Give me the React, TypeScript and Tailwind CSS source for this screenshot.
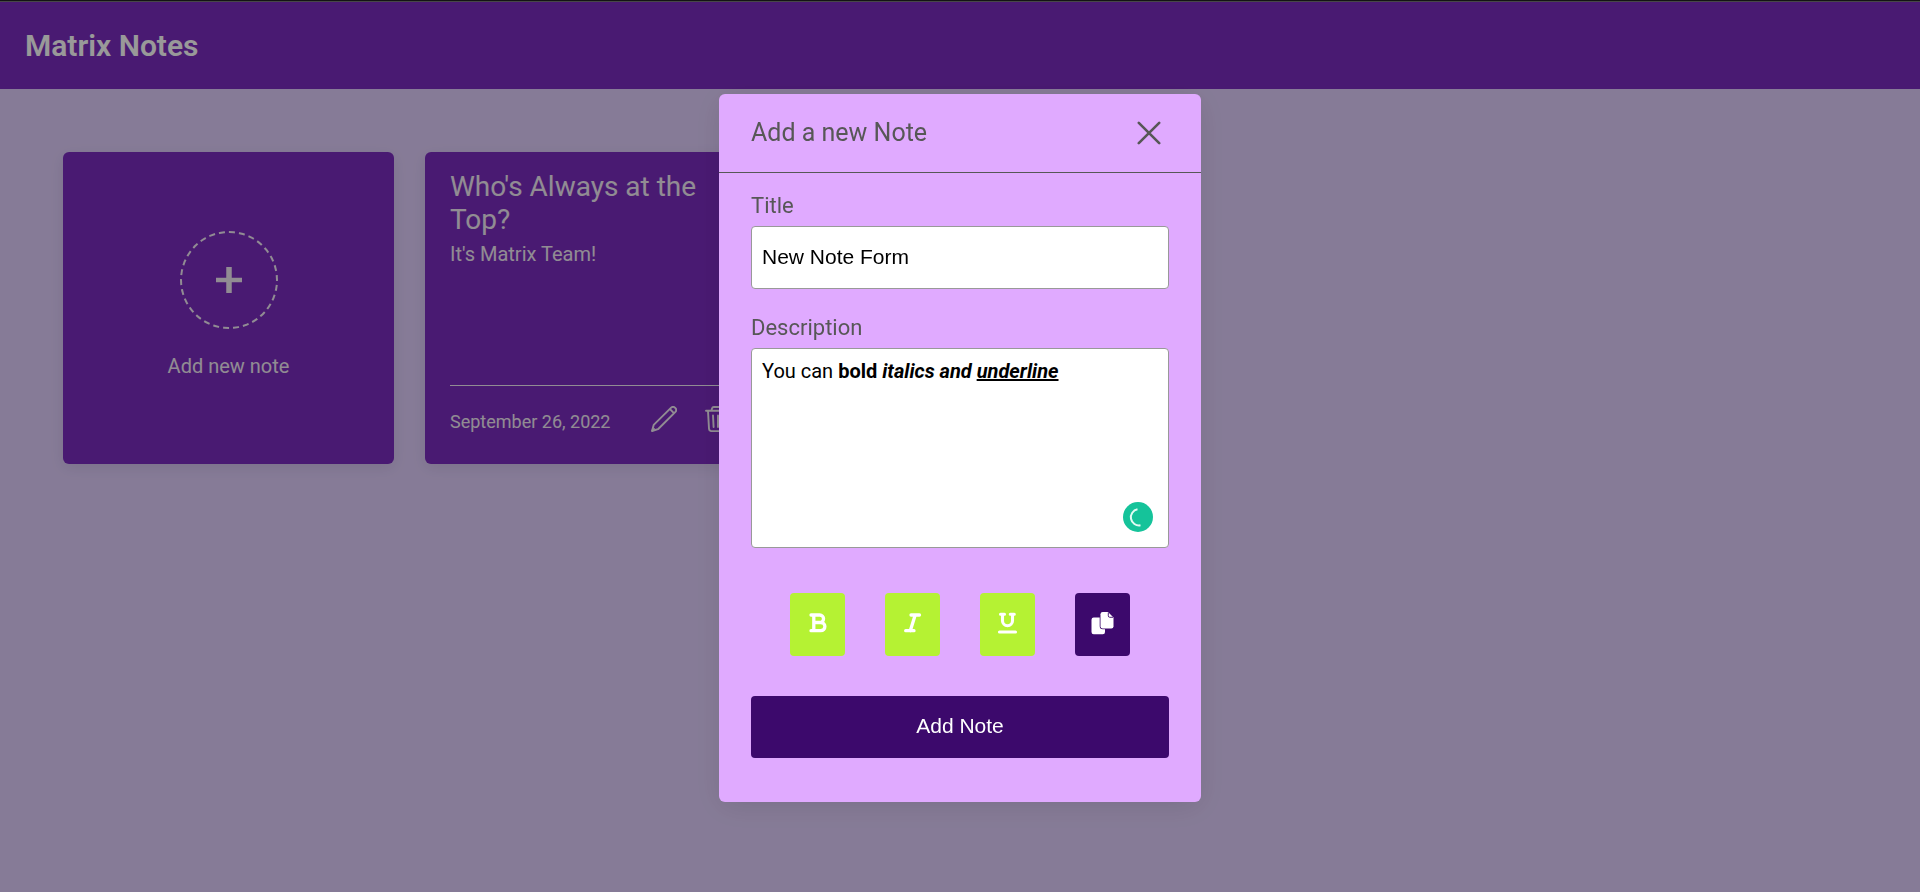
import React from "react";

function PencilIcon() {
  return (
    <svg viewBox="0 0 26 26" className="size-[26px]" fill="none" stroke="currentColor" strokeWidth="1.9" strokeLinejoin="round" aria-hidden="true">
      <path d="M1 25 2.700 18.900 19.900 1.900a3 3 0 0 1 4.300 4.300L7 23.200Z" />
      <path d="M19 3.200 22.900 7.100M1 25l2.600-2.600" />
    </svg>
  );
}

function TrashIcon() {
  return (
    <svg viewBox="0 0 26 26" className="size-[26px]" fill="none" stroke="currentColor" strokeWidth="1.9" strokeLinecap="round" strokeLinejoin="round" aria-hidden="true">
      <path d="M1 4.700h24M6.500 4.500 7 2.400q.4-1.400 1.800-1.400h8.400q1.400 0 1.800 1.400l.5 2.100M3 5l1 17.800q.2 2.300 2.500 2.300h13q2.300 0 2.500-2.300L23 5M8 9.500l.6 11.500M13 9.500V21M18 9.500 17.400 21" />
    </svg>
  );
}

function CloseIcon() {
  return (
    <svg viewBox="0 0 24 24" className="size-6" fill="none" stroke="currentColor" strokeWidth="2.6" strokeLinecap="round" aria-hidden="true">
      <path d="M1.800 1.800 22.200 22.200M22.200 1.800 1.800 22.200" />
    </svg>
  );
}

const glyph = {
  viewBox: "0 0 24 24",
  className: "size-6",
  fill: "none",
  stroke: "currentColor",
  strokeWidth: 3.3,
  strokeLinecap: "round" as const,
  strokeLinejoin: "round" as const,
  "aria-hidden": true,
};

function BoldIcon() {
  return (
    <svg {...glyph}>
      <path d="M5 4H13.800a3.600 3.600 0 0 1 0 7.500H8M5 19.700h9.800a4.100 4.100 0 0 0 0-8.200H13.500M7.800 4v15.700" />
    </svg>
  );
}

function ItalicIcon() {
  return (
    <svg {...glyph}>
      <path d="M10 4h8.500M4.700 19.700h8.300M14.200 4 9.300 19.700" />
    </svg>
  );
}

function UnderlineIcon() {
  return (
    <svg {...glyph}>
      <path d="M4.500 3.300h4M14.300 3.300h4M6.500 3.300v6.400a5 5 0 0 0 10 0V3.300M3.500 21h16" strokeWidth="3.100" />
    </svg>
  );
}

function CopyIcon() {
  return (
    <svg viewBox="0 0 24 24" className="size-6" fill="currentColor" aria-hidden="true">
      <rect x="0.500" y="6.600" width="13.500" height="16.600" rx="2.200" />
      <path
        d="M11.700 1h5.300l5.500 5.500v8.800q0 2.200-2.200 2.200h-8.600q-2.200 0-2.200-2.200V3.200q0-2.200 2.200-2.200Z"
        stroke="#3c096c"
        strokeWidth="1.600"
        paintOrder="stroke"
      />
      <path d="M17.300 1.500v3.300q0 1.500 1.500 1.500h3.400" fill="none" stroke="#3c096c" strokeWidth="0.900" />
    </svg>
  );
}

const formats = [
  { name: "Bold", Icon: BoldIcon },
  { name: "Italic", Icon: ItalicIcon },
  { name: "Underline", Icon: UnderlineIcon },
];

export default function App() {
  return (
    <div className="min-h-screen border-t border-[#222222] bg-[#e0cefc] font-[Roboto,sans-serif] text-[#f2eaf5]">
      <header className="border-t border-[#777777] bg-[#7b2cbf] px-[25px] py-6">
        <h1 className="text-[30px] leading-[39px] font-semibold text-white">Matrix Notes</h1>
      </header>

      <main className="flex flex-wrap gap-[31px] px-[63px] py-[63px]">
        <button type="button" className="flex h-[312px] w-[331px] flex-col items-center justify-center gap-[25px] rounded-md bg-[#7b2cbf] pb-[7px] shadow-[0_4px_15px_rgba(0,0,0,0.08)]">
          <span className="flex size-[98px] items-center justify-center rounded-full border-2 border-dashed border-current">
            <svg viewBox="0 0 26 26" className="size-[26px]" stroke="currentColor" aria-hidden="true">
              <path d="M13 0v26" strokeWidth="5.500" />
              <path d="M0 13h26" strokeWidth="4.500" />
            </svg>
          </span>
          <span className="text-xl leading-6">Add new note</span>
        </button>

        <article className="flex h-[312px] w-[331px] flex-col rounded-md bg-[#7b2cbf] px-[25px] pt-[18px] pb-[26px] shadow-[0_4px_15px_rgba(0,0,0,0.08)]">
          <h2 className="text-[28px] leading-[33px]">Who's Always at the Top?</h2>
          <p className="mt-1.5 text-xl leading-6">It's Matrix Team!</p>
          <footer className="mt-auto flex items-start justify-between border-t border-current pt-5">
            <time dateTime="2022-09-26" className="text-lg leading-8">September 26, 2022</time>
            <div className="flex gap-7">
              <button type="button" aria-label="Edit note"><PencilIcon /></button>
              <button type="button" aria-label="Delete note"><TrashIcon /></button>
            </div>
          </footer>
        </article>
      </main>

      <div className="fixed inset-0 flex items-center justify-center bg-black/40 pt-1">
        <section role="dialog" aria-labelledby="dialog-title" className="w-[482px] rounded-md bg-[#e0aaff] text-[#575757] shadow-[0_5px_30px_rgba(0,0,0,0.1)]">
          <div className="flex items-center justify-between border-b border-[#575757] py-5 pr-10 pl-8">
            <h2 id="dialog-title" className="text-[25px] leading-[38px]">Add a new Note</h2>
            <button type="button" aria-label="Close"><CloseIcon /></button>
          </div>

          <form className="px-8 pt-[19px] pb-11" onSubmit={(e) => e.preventDefault()}>
            <label htmlFor="title" className="block text-[22px] leading-7">Title</label>
            <input
              id="title"
              type="text"
              defaultValue="New Note Form"
              className="mt-1.5 block h-[63px] w-full rounded border border-[#999999] bg-white px-2.5 pb-0.5 font-['Liberation_Sans',sans-serif] text-[21px] text-black outline-none"
            />

            <span id="description-label" className="mt-[25px] block text-[22px] leading-7">Description</span>
            <div className="relative mt-1.5">
              <div
                role="textbox"
                aria-multiline="true"
                aria-labelledby="description-label"
                contentEditable
                suppressContentEditableWarning
                className="h-[200px] rounded border border-[#999999] bg-white px-2.5 py-2.5 text-xl leading-6 text-black outline-none"
              >
                You can <b>bold <i>italics and <u>underline</u></i></b>
              </div>
              <svg viewBox="0 0 30 30" className="absolute right-4 bottom-4 size-[30px]" aria-hidden="true">
                <circle cx="15" cy="15" r="15" fill="#15c39a" />
                <path d="M14.500 7.300a8 8 0 0 0 3 16" fill="none" stroke="#e3fbf4" strokeWidth="2" />
              </svg>
            </div>

            <div className="mt-[45px] flex justify-center gap-10">
              {formats.map(({ name, Icon }) => (
                <button key={name} type="button" aria-label={name} className="flex h-[63px] w-[55px] items-center justify-center rounded bg-[#b5f233] pb-[3px] text-white">
                  <Icon />
                </button>
              ))}
              <button type="button" aria-label="Copy" className="flex h-[63px] w-[55px] items-center justify-center rounded bg-[#3c096c] pb-[3px] text-white">
                <CopyIcon />
              </button>
            </div>

            <button type="submit" className="mt-10 block h-[62px] w-full rounded bg-[#3c096c] pb-0.5 font-['Liberation_Sans',sans-serif] text-[21px] font-medium text-white">
              Add Note
            </button>
          </form>
        </section>
      </div>
    </div>
  );
}
